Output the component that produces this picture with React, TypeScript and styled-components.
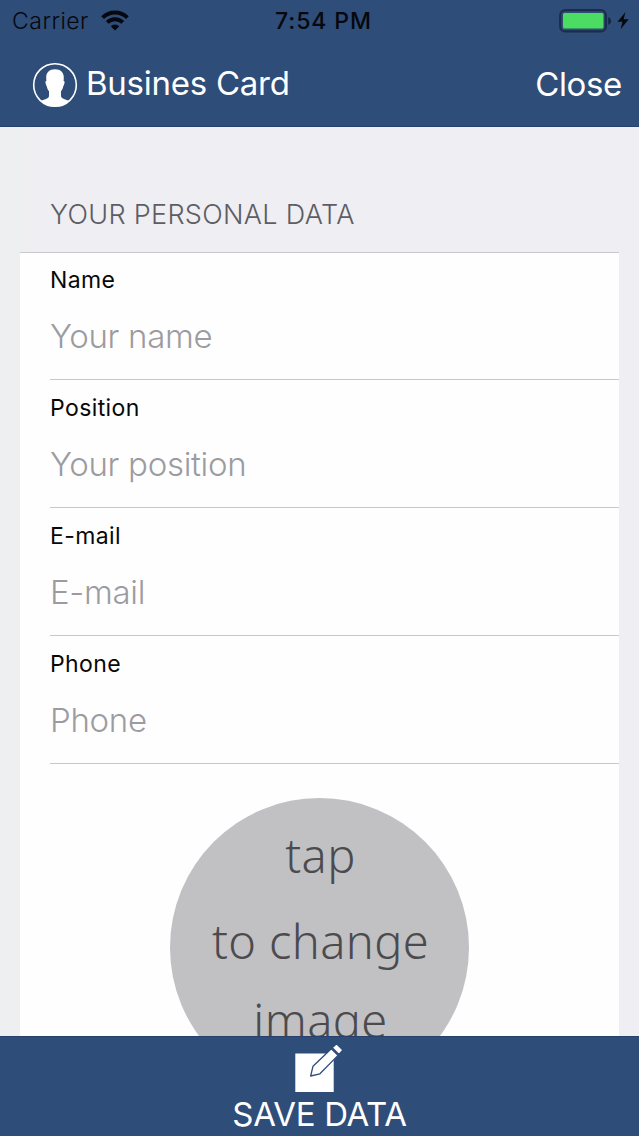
import React from "react";
import styled, { createGlobalStyle } from "styled-components";

const NAVY = "#2f4d79";

const GlobalStyle = createGlobalStyle`
  * { box-sizing: border-box; }
  body {
    margin: 0;
    background: #efeff4;
    font-family: Inter, "Liberation Sans", sans-serif;
  }
`;

const Screen = styled.div`
  width: 639px;
  height: 1136px;
  display: flex;
  flex-direction: column;
  overflow: hidden;
  background: #efeef3;
`;

const Header = styled.header`
  flex: none;
  height: 127px;
  background: ${NAVY};
  border-bottom: 1px solid #27416c;
`;

const StatusBar = styled.div`
  height: 40px;
  display: grid;
  grid-template-columns: 1fr auto 1fr;
  align-items: center;
  padding: 1px 9px 0 12px;
  color: #05080e;
`;

const Carrier = styled.div`
  display: flex;
  align-items: center;
  gap: 12px;
  font-size: 23px;
  line-height: 30px;
  letter-spacing: 0.5px;
  font-weight: 350;
`;

const Clock = styled.div`
  font-size: 23px;
  line-height: 30px;
  font-weight: 550;
  letter-spacing: 0.9px;
  padding-left: 5px;
`;

const Power = styled.div`
  display: flex;
  justify-content: flex-end;
`;

const NavBar = styled.div`
  height: 86px;
  display: flex;
  align-items: center;
  justify-content: space-between;
  padding: 4px 17px 0 32px;
  color: #fff;
`;

const Brand = styled.div`
  display: flex;
  align-items: center;
  gap: 8px;
`;

const Title = styled.h1`
  margin: 0;
  font-size: 33px;
  line-height: 40px;
  font-weight: 370;
  letter-spacing: -0.25px;
  padding-bottom: 4px;
`;

const CloseButton = styled.button`
  border: 0;
  padding: 0 0 3px;
  background: none;
  color: inherit;
  font: 370 33px/40px Inter, sans-serif;
  letter-spacing: -0.35px;
`;

const Content = styled.main`
  flex: 1;
  min-height: 0;
  overflow: hidden;
  padding: 0 20px;
  background: linear-gradient(90deg, #eeeff1 0 20px, #efeef3 40px);
`;

const SectionTitle = styled.h2`
  margin: 0;
  height: 125px;
  padding: 71px 0 0 30px;
  font-size: 27px;
  line-height: 34px;
  font-weight: 360;
  letter-spacing: 0.32px;
  color: #5d5d63;
`;

const Card = styled.section`
  height: 900px;
  background: #fefeff;
  border-top: 1px solid #c8c7cc;
`;

const Field = styled.div`
  height: 128px;
  margin-left: 30px;
  padding-top: 13px;
  border-bottom: 1px solid #c8c7cc;
  &:first-child { height: 127px; padding-top: 12px; }
`;

const Label = styled.div`
  font-size: 23px;
  line-height: 30px;
  font-weight: 370;
  letter-spacing: 0.4px;
  color: #08080a;
`;

const Placeholder = styled.div`
  margin-top: 21px;
  font-size: 33px;
  line-height: 40px;
  font-weight: 360;
  letter-spacing: -0.3px;
  color: #9c9ca0;
`;

const Photo = styled.button`
  display: block;
  width: 299px;
  height: 299px;
  margin: 34px auto 0;
  padding: 0;
  border: 0;
  border-radius: 50%;
  background: #c1c0c3;
  color: #4b4b4e;
  font-family: "Noto Sans", "Open Sans", sans-serif;
  font-size: 47px;
  font-weight: 330;
  text-align: center;
`;

const PhotoLine = styled.span<{ $height: number }>`
  display: block;
  height: ${(p) => p.$height}px;
  line-height: 70px;
  letter-spacing: 0.4px;
  padding-left: 2px;
  white-space: nowrap;
`;

const SaveBar = styled.button`
  flex: none;
  height: 100px;
  display: flex;
  flex-direction: column;
  align-items: center;
  border: 0;
  border-top: 1px solid #27416c;
  padding: 6px 0 0;
  background: ${NAVY};
  color: #fff;
`;

const SaveText = styled.span`
  font: 370 33px/40px Inter, sans-serif;
  letter-spacing: -0.35px;
  margin-top: 1px;
`;

const WifiIcon = () => (
  <svg width="28" height="21" viewBox="0 0 28 21" fill="none" stroke="currentColor" strokeWidth="4">
    <path d="M1.6 7.6 A17.5 17.5 0 0 1 26.4 7.6" />
    <path d="M6.2 12.4 A11 11 0 0 1 21.8 12.4" />
    <path d="M14 20.4 L9.8 16.2 A6 6 0 0 1 18.2 16.2 Z" fill="currentColor" stroke="none" />
  </svg>
);

const BatteryIcon = () => (
  <svg width="71" height="24" viewBox="0 0 71 24">
    <rect x="1.2" y="1.2" width="45.6" height="21.2" rx="5" fill="none" stroke="#1c2d4b" strokeWidth="2.2" />
    <rect x="4" y="4" width="40.5" height="15.6" rx="1.5" fill="#4bdc62" />
    <path d="M49.3 8 q2.8 1.3 2.8 4 t-2.8 4z" fill="#14223a" />
    <path d="M66.3 3.3 L58.5 12.8 h5 L61.6 20.3 L69.7 10.3 h-5z" fill="#05080e" />
  </svg>
);

const ProfileIcon = () => (
  <svg width="46" height="46" viewBox="0 0 46 46">
    <circle cx="23" cy="23" r="21.3" fill="none" stroke="#fff" strokeWidth="1.6" />
    <path
      fill="#fff"
      d="M23 7.2 C28.8 7.2 32 10.6 31.8 16 L31.6 19 C33 18.8 32.8 21.5 31.4 24 C30.9 26.2 30.1 28 29 29.3 L29 34 C29.4 36.8 32.5 37 37.3 38.9 A21.3 21.3 0 0 1 8.7 38.9 C13.5 37 16.6 36.8 17 34 L17 29.3 C15.9 28 15.1 26.2 14.6 24 C13.2 21.5 13 18.8 14.4 19 L14.2 16 C14 10.6 17.2 7.2 23 7.2Z"
    />
  </svg>
);

const EditIcon = () => (
  <svg width="50" height="50" viewBox="0 0 50 50">
    <rect x="0.3" y="10.5" width="38.4" height="38.5" fill="#fff" />
    <g stroke={NAVY} strokeWidth="1.3" strokeLinejoin="round" fill="#fff">
      <path d="M15.7 33 L18 23.2 L36.3 5.7 L43 12.4 L24.9 30.8 Z" />
      <path d="M37.2 4.7 L41.5 0.7 L47.9 7 L44 11.4 Z" />
    </g>
  </svg>
);

const fields = [
  { label: "Name", hint: "Your name" },
  { label: "Position", hint: "Your position" },
  { label: "E-mail", hint: "E-mail" },
  { label: "Phone", hint: "Phone" },
];

export default function App() {
  return (
    <>
      <GlobalStyle />
      <Screen>
        <Header>
          <StatusBar>
            <Carrier>
              <span>Carrier</span>
              <WifiIcon />
            </Carrier>
            <Clock>7:54 PM</Clock>
            <Power>
              <BatteryIcon />
            </Power>
          </StatusBar>
          <NavBar>
            <Brand>
              <ProfileIcon />
              <Title>Busines Card</Title>
            </Brand>
            <CloseButton>Close</CloseButton>
          </NavBar>
        </Header>
        <Content>
          <SectionTitle>YOUR PERSONAL DATA</SectionTitle>
          <Card>
            {fields.map((f) => (
              <Field key={f.label}>
                <Label>{f.label}</Label>
                <Placeholder>{f.hint}</Placeholder>
              </Field>
            ))}
            <Photo>
              <PhotoLine $height={86}>tap</PhotoLine>
              <PhotoLine $height={79}>to change</PhotoLine>
              <PhotoLine $height={90}>image</PhotoLine>
            </Photo>
          </Card>
        </Content>
        <SaveBar>
          <EditIcon />
          <SaveText>SAVE DATA</SaveText>
        </SaveBar>
      </Screen>
    </>
  );
}
